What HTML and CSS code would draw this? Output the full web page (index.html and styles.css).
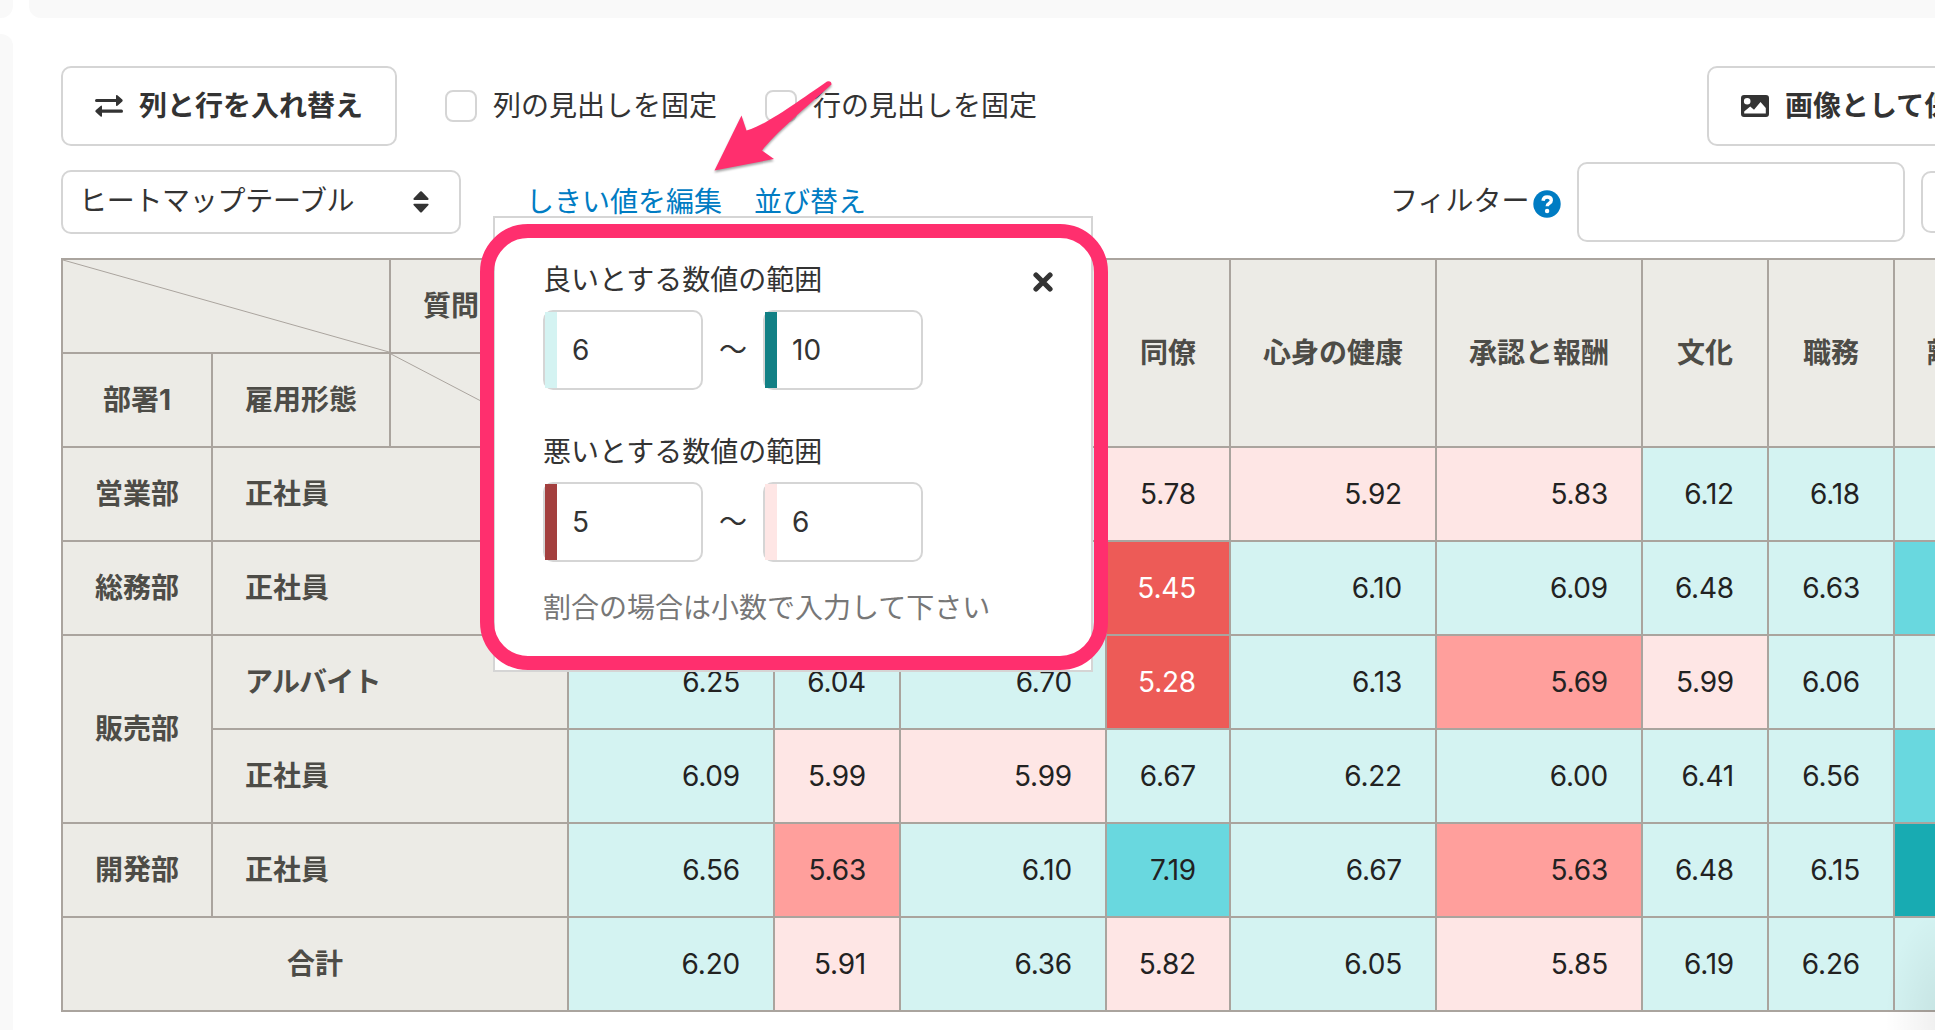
FILE: index.html
```html
<!DOCTYPE html>
<html lang="ja">
<head>
<meta charset="utf-8">
<title>ヒートマップテーブル</title>
<link rel="stylesheet" href="styles.css">
</head>
<body>
<div class="page">
  <aside class="side"><div class="side-top"></div><div class="side-main"></div></aside>
  <div class="content">
    <div class="topbar"></div>
    <main class="panel">
      <div class="toolbar">
        <button class="btn" type="button">
          <svg class="icon" width="28" height="24" viewBox="0 0 28 24"><path d="M1.500 4.900H21V2Q21 .2 22.400 1.300L27.300 5.600Q28.200 6.500 27.300 7.400L22.400 11.700Q21 12.800 21 11V8.100H1.500Q0 8.100 0 6.500Q0 4.900 1.500 4.900ZM26.500 15.600H7V12.700Q7 10.900 5.600 12L.7 16.300Q-.2 17.200.7 18.100L5.600 22.400Q7 23.500 7 21.700V18.800H26.500Q28 18.800 28 17.200Q28 15.600 26.500 15.600Z"/></svg>
          <span>列と行を入れ替え</span>
        </button>
        <label class="check"><span class="box"></span>列の見出しを固定</label>
        <label class="check second"><span class="box"></span>行の見出しを固定</label>
        <button class="btn save" type="button">
          <svg class="icon" width="28" height="22" viewBox="0 0 28 22"><path fill-rule="evenodd" d="M3 0H25Q28 0 28 3V19Q28 22 25 22H3Q0 22 0 19V3Q0 0 3 0ZM6.200 3A3.300 3.300 0 1 0 6.200 9.600A3.300 3.300 0 1 0 6.200 3ZM3.200 18.500H24.800V13L19.500 7L13 14.800L9.200 11.500L3.200 16.500Z"/></svg>
          <span>画像として保存</span>
        </button>
      </div>
      <div class="controls">
        <div class="select"><span>ヒートマップテーブル</span>
          <svg width="16" height="22" viewBox="0 0 16 22"><path d="M7.200.6Q8 0 8.800.6L15.500 7.600Q16 9 14.700 9H1.300Q0 9 .5 7.600ZM7.200 21.200Q8 22 8.800 21.200L15.500 14Q16 12.700 14.700 12.700H1.300Q0 12.700.5 14Z"/></svg>
        </div>
        <a class="link">しきい値を編集</a>
        <a class="link sort">並び替え</a>
        <div class="filter">
          <span>フィルター</span>
          <svg class="help" width="28" height="28" viewBox="0 0 28 28"><circle cx="14" cy="14" r="13.700" fill="#007cc3"/><path d="M10 10.800Q10.500 7 14.200 7Q18.300 7 18.300 10.300Q18.300 12.200 16.300 13.300Q14.200 14.400 14.200 16.300" fill="none" stroke="#fff" stroke-width="3.400"/><circle cx="14.100" cy="21" r="2.200" fill="#fff"/></svg>
          <div class="field"></div>
          <div class="next"></div>
        </div>
      </div>
      <table class="heat">
        <colgroup><col class="c150"><col class="c178"><col class="c178"><col class="c206"><col class="c126"><col class="c206"><col class="c124"><col class="c206"><col class="c206"><col class="c126"><col class="c126"><col class="c206"></colgroup>
        <tr>
          <th colspan="2" class="diag"><svg viewBox="0 0 100 100" preserveAspectRatio="none"><path d="M0 0L100 100"/></svg></th>
          <th class="left">質問</th>
          <th rowspan="2"></th><th rowspan="2"></th><th rowspan="2"></th>
          <th rowspan="2">同僚</th><th rowspan="2">心身の健康</th><th rowspan="2">承認と報酬</th><th rowspan="2">文化</th><th rowspan="2">職務</th><th rowspan="2" class="left">離職</th>
        </tr>
        <tr><th>部署1</th><th>雇用形態</th><th class="diag"><svg viewBox="0 0 100 100" preserveAspectRatio="none"><path d="M0 0L100 100"/></svg></th></tr>
        <tr><th>営業部</th><th colspan="2" class="left">正社員</th><td class="g1"></td><td class="g1"></td><td class="g1"></td><td class="b1">5.78</td><td class="b1">5.92</td><td class="b1">5.83</td><td class="g1">6.12</td><td class="g1">6.18</td><td class="g1"></td></tr>
        <tr><th>総務部</th><th colspan="2" class="left">正社員</th><td class="g1"></td><td class="g1"></td><td class="g1"></td><td class="b3">5.45</td><td class="g1">6.10</td><td class="g1">6.09</td><td class="g1">6.48</td><td class="g1">6.63</td><td class="g2"></td></tr>
        <tr><th rowspan="2">販売部</th><th colspan="2" class="left kana">アルバイト</th><td class="g1">6.25</td><td class="g1">6.04</td><td class="g1">6.70</td><td class="b3">5.28</td><td class="g1">6.13</td><td class="b2">5.69</td><td class="b1">5.99</td><td class="g1">6.06</td><td class="g1"></td></tr>
        <tr><th colspan="2" class="left">正社員</th><td class="g1">6.09</td><td class="b1">5.99</td><td class="b1">5.99</td><td class="g1">6.67</td><td class="g1">6.22</td><td class="g1">6.00</td><td class="g1">6.41</td><td class="g1">6.56</td><td class="g2"></td></tr>
        <tr><th>開発部</th><th colspan="2" class="left">正社員</th><td class="g1">6.56</td><td class="b2">5.63</td><td class="g1">6.10</td><td class="g2">7.19</td><td class="g1">6.67</td><td class="b2">5.63</td><td class="g1">6.48</td><td class="g1">6.15</td><td class="g3"></td></tr>
        <tr><th colspan="3">合計</th><td class="g1">6.20</td><td class="b1">5.91</td><td class="g1">6.36</td><td class="b1">5.82</td><td class="g1">6.05</td><td class="b1">5.85</td><td class="g1">6.19</td><td class="g1">6.26</td><td class="g1"></td></tr>
      </table>
    </main>
  </div>

  <section class="popover">
    <svg class="close" width="20" height="20" viewBox="0 0 20 20"><path d="M3 3L17 17M17 3L3 17"/></svg>
    <div class="label">良いとする数値の範囲</div>
    <div class="range"><div class="num good-lo">6</div><span>〜</span><div class="num good-hi">10</div></div>
    <div class="label">悪いとする数値の範囲</div>
    <div class="range"><div class="num bad-lo">5</div><span>〜</span><div class="num bad-hi">6</div></div>
    <div class="note">割合の場合は小数で入力して下さい</div>
  </section>
  <div class="frame"></div>
  <svg class="arrow" width="140" height="110" viewBox="700 70 140 110"><path d="M714.500 170.500L741.500 115.500L746.500 130.500C765 126 800 100 827 81.500Q831.500 80.500 831.500 84.500C805 108 775 134 762 150.500L774 159Z"/></svg>
  <div class="corner"></div>
</div>
</body>
</html>
```
FILE: styles.css
```css
* { box-sizing: border-box; }
body { margin: 0; background: #fff; color: #333; font: 28px/42px Inter, "Noto Sans CJK JP", sans-serif; }
.page { position: relative; width: 1935px; height: 1030px; overflow: hidden; display: flex; gap: 16px; }
.side { width: 13px; flex: none; display: flex; flex-direction: column; gap: 16px; }
.side-top { height: 18px; background: #f9f9f9; border-radius: 0 0 12px 0; }
.side-main { flex: 1; background: #f9f9f9; border-radius: 0 12px 0 0; }
.content { flex: none; width: 1906px; }
.topbar { height: 18px; background: #f9f9f9; border-radius: 0 0 0 12px; }
.panel { padding: 48px 0 0 32px; }
.toolbar { display: flex; align-items: center; height: 80px; }
.btn { display: flex; align-items: center; gap: 16px; flex: none; width: 336px; height: 80px; padding: 0 0 1px 32px; border: 2px solid #d5d5d5; border-radius: 10px; background: #fff; color: #333; font: inherit; font-weight: 700; white-space: nowrap; }
.icon { flex: none; fill: #333; overflow: visible; }
.check { display: flex; align-items: center; gap: 16px; margin-left: 48px; white-space: nowrap; }
.box { width: 32px; height: 32px; border: 2px solid #d5d5d5; border-radius: 8px; }
.save { margin-left: 670px; }
.controls { display: flex; align-items: center; height: 80px; margin-top: 16px; white-space: nowrap; }
.select { display: flex; flex: none; align-items: center; justify-content: space-between; width: 400px; height: 64px; padding: 0 30px 2px 16px; border: 2px solid #d5d5d5; border-radius: 10px; }
.select span { letter-spacing: -.3px; }
.select svg { fill: #333; margin-top: 2px; }
.link { flex: none; margin-left: 65px; color: #007cc3; }
.sort { margin-left: 32px; }
.filter { display: flex; flex: none; align-items: center; margin-left: 524px; }
.filter span { margin-top: -2px; }
.help { flex: none; margin: 4px 16px 0 4px; }
.field { flex: none; width: 328px; height: 80px; border: 2px solid #d5d5d5; border-radius: 10px; }
.next { flex: none; width: 80px; height: 62px; margin-left: 16px; border: 2px solid #d5d5d5; border-radius: 10px; }
.heat { width: 2040px; margin-top: 16px; table-layout: fixed; border-collapse: collapse; }
.heat tr { height: 94px; }
.c124 { width: 124px; } .c126 { width: 126px; } .c150 { width: 150px; } .c178 { width: 178px; } .c206 { width: 206px; }
.heat th, .heat td { border: 2px solid #aaa49e; padding: 0; white-space: nowrap; vertical-align: middle; }
.heat th { background: #ecebe6; color: #4d4c47; }
.heat th.left { text-align: left; padding-left: 32px; }
.heat th.kana { letter-spacing: -.8px; }
.heat td { text-align: right; padding-right: 33px; color: #222; letter-spacing: -.2px; }
.heat .diag svg { display: block; width: 100%; height: 92px; }
.diag path { fill: none; stroke: #aaa49e; stroke-width: 1; vector-effect: non-scaling-stroke; }
.heat .g1 { background: #d4f3f2; } .heat .g2 { background: #69d8df; } .heat .g3 { background: #18abb2; }
.heat .b1 { background: #fee6e5; } .heat .b2 { background: #ff9f9c; } .heat .b3 { background: #ed5b57; color: #fff; }
.popover { position: absolute; left: 493px; top: 216px; width: 600px; height: 456px; padding: 41px 48px; background: #fff; border: 2px solid #d5d5d5; white-space: nowrap; }
.close { position: absolute; right: 38px; top: 54px; fill: none; stroke: #333; stroke-width: 5.200; stroke-linecap: round; }
.label { height: 51px; }
.range { display: flex; align-items: center; height: 80px; margin-bottom: 41px; }
.range span { width: 60px; text-align: center; }
.num { width: 160px; height: 80px; padding-left: 16px; border: 2px solid #d5d5d5; border-radius: 10px; display: flex; align-items: center; }
.num::before { content: ""; width: 12px; height: 76px; margin: 0 15px 0 -16px; }
.good-lo::before { background: #d4f3f2; } .good-hi::before { background: #128085; }
.bad-lo::before { background: #a33f3e; } .bad-hi::before { background: #fee6e5; }
.note { color: #777; margin-top: -16px; }
.frame { position: absolute; left: 480px; top: 224px; width: 628px; height: 446px; border: 14px solid #ff2f6e; border-radius: 48px; }
.arrow { position: absolute; left: 700px; top: 70px; fill: #ff2f6e; filter: drop-shadow(0 2px 1px rgba(0,0,0,.35)); }
.corner { position: absolute; right: 0; bottom: 0; width: 50px; height: 110px; background: radial-gradient(ellipse 60px 110px at 120% 90%, rgba(0,0,0,.07), transparent); }
```
